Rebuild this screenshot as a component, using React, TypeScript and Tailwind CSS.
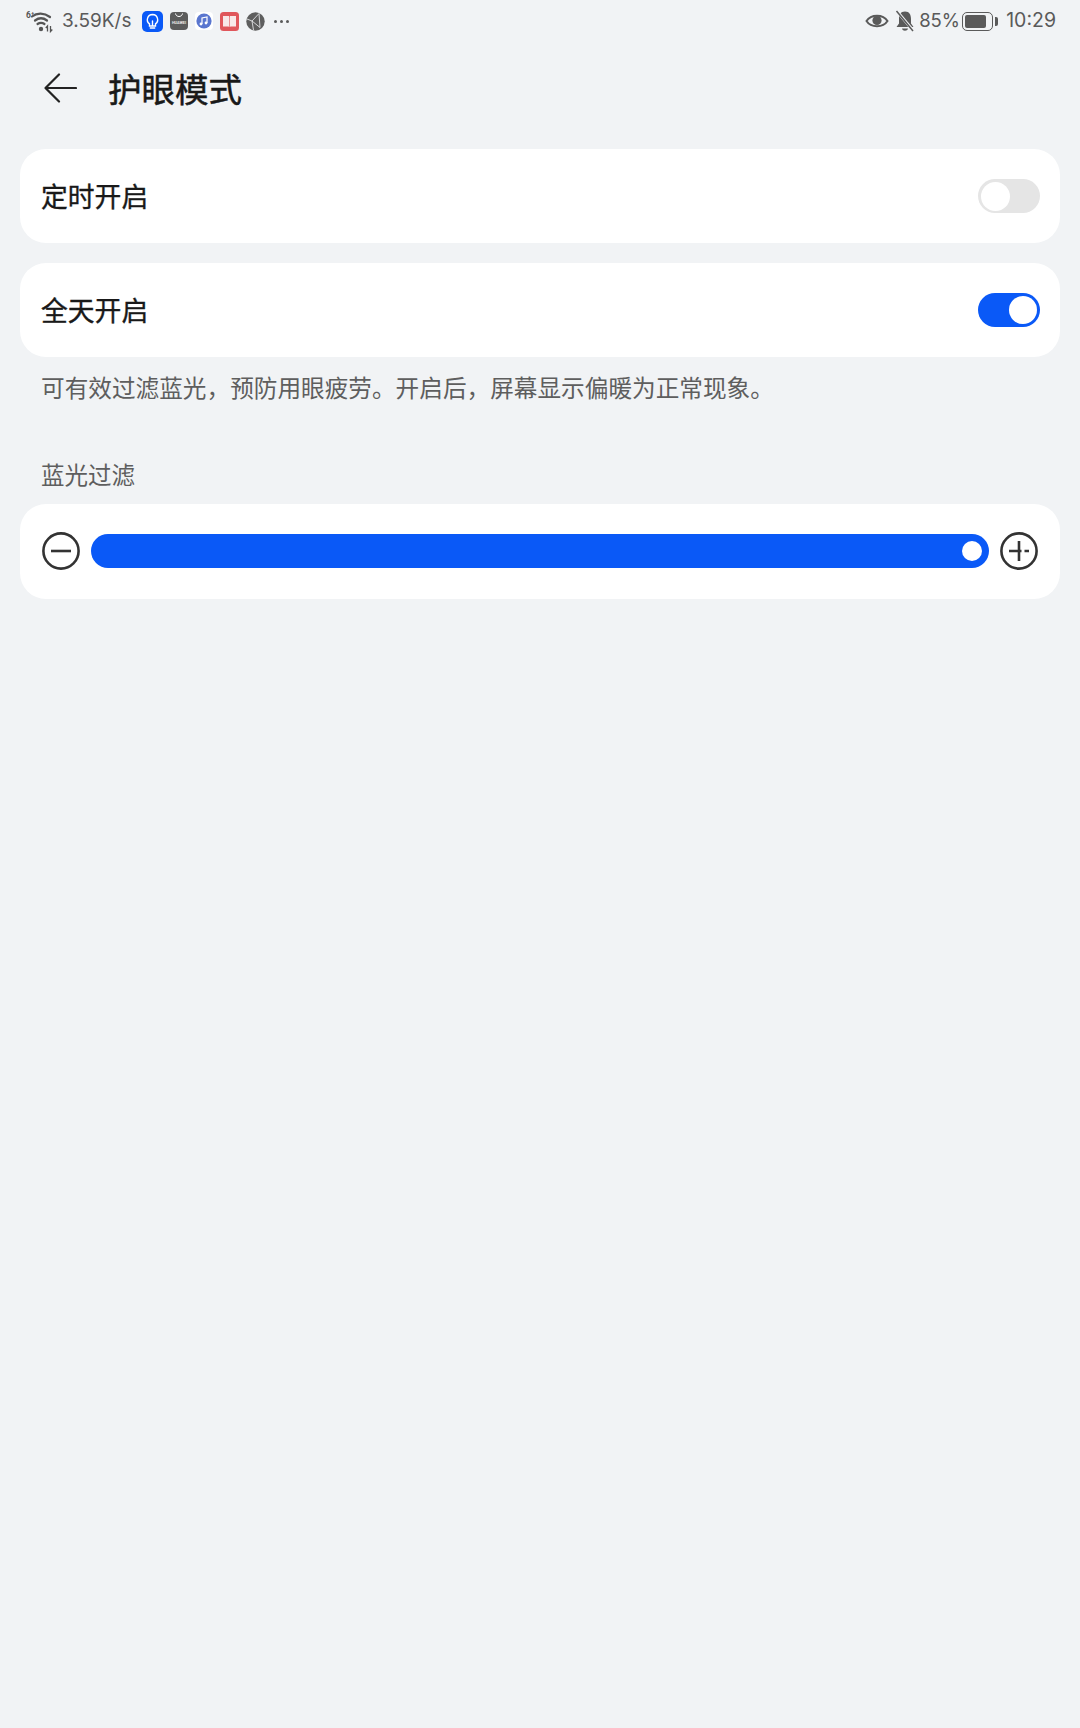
const cjk = "font-['Noto_Sans_CJK_SC','Noto_Sans',sans-serif]";

function Wifi() {
  return (
    <svg width="30" height="24" viewBox="0 0 30 24" className="shrink-0">
      <text x="1" y="9" fontSize="8.5" fontWeight="700" fill="#555" fontFamily="Roboto, sans-serif">6⁺</text>
      <g fill="none" stroke="#555" strokeWidth="2.2" strokeLinecap="round">
        <path d="M7 7.5 C12 3.5 19 3.5 25 8" />
        <path d="M10 11.5 C14 8.5 18 8.5 22 11.5" />
        <path d="M12.5 15 C15 13.3 17 13.3 19.5 15" />
      </g>
      <circle cx="16" cy="20" r="2.2" fill="#555" />
      <path d="M22.5 22.5 V17 L20.8 19 M25.5 17 V22.5 L27.3 20.5" fill="none" stroke="#555" strokeWidth="1.3" />
    </svg>
  );
}

function Tips() {
  return (
    <svg width="21" height="21" viewBox="0 0 21 21" className="shrink-0">
      <rect width="21" height="21" rx="5" fill="#0a59f7" />
      <path d="M10.5 3.5 a5.2 5.2 0 0 1 3 9.4 V15 H7.5 V12.9 a5.2 5.2 0 0 1 3-9.4 Z M8.3 17 H12.7 M10.5 15 V10" fill="none" stroke="#fff" strokeWidth="1.4" strokeLinecap="round" />
    </svg>
  );
}

function Store() {
  return (
    <svg width="18" height="18" viewBox="0 0 18 18" className="shrink-0">
      <rect width="18" height="18" rx="4" fill="#5c5c5c" />
      <path d="M5.5 1.5 C6 5.5 12 5.5 12.5 1.5" fill="none" stroke="#fff" strokeWidth="1" />
      <text x="9" y="11.5" textAnchor="middle" fontSize="3.8" fontWeight="700" fill="#e8e8e8" fontFamily="Roboto, sans-serif">HUAWEI</text>
    </svg>
  );
}

function Music() {
  return (
    <svg width="18" height="18" viewBox="0 0 18 18" className="shrink-0">
      <rect width="18" height="18" rx="4" fill="#fff" />
      <circle cx="9" cy="9" r="7.6" fill="#5a76cf" />
      <path d="M7 12 V6 L12 5 V11" fill="none" stroke="#fff" strokeWidth="1.2" />
      <circle cx="6" cy="12" r="1.4" fill="#fff" />
      <circle cx="11" cy="11" r="1.4" fill="#fff" />
    </svg>
  );
}

function Book() {
  return (
    <svg width="19" height="19" viewBox="0 0 19 19" className="shrink-0">
      <rect width="19" height="19" rx="3.5" fill="#e0565b" />
      <path d="M3 4 H8.6 C9 4 9.2 4.6 9.2 5 V15 L8.4 14.5 H3 Z M16 4 H10.4 C10 4 9.8 4.6 9.8 5 V15 L10.6 14.5 H16 Z" fill="#f8e8e8" />
    </svg>
  );
}

function Globe() {
  return (
    <svg width="19" height="19" viewBox="0 0 19 19" className="shrink-0">
      <circle cx="9.5" cy="9.5" r="9.2" fill="#5e5e5e" />
      <path d="M13 1.5 L6 9 L14 15.5 M6 9 L1 7 M6 9 L7.5 18 M13 1.5 L14 15.5" fill="none" stroke="#f1f3f5" strokeWidth="0.8" />
    </svg>
  );
}

function StatusBar() {
  return (
    <div className="flex h-[40px] items-center justify-between pl-[25px] pr-[24px] pt-[2px] text-[19.5px] text-[#5a5a5a] font-['Inter','Roboto',sans-serif]">
      <div className="flex items-center">
        <Wifi />
        <span className="ml-[7px] w-[80px] whitespace-nowrap text-[19px]">3.59K/s</span>
        <div className="flex items-center gap-[7px]">
          <Tips />
          <Store />
          <Music />
          <Book />
          <Globe />
        </div>
        <div className="ml-[9px] flex items-center gap-[3px]">
          <span className="h-[3px] w-[3px] rounded-full bg-[#5a5a5a]" />
          <span className="h-[3px] w-[3px] rounded-full bg-[#5a5a5a]" />
          <span className="h-[3px] w-[3px] rounded-full bg-[#5a5a5a]" />
        </div>
      </div>
      <div className="flex items-center">
        <svg width="24" height="18" viewBox="0 0 24 18" className="shrink-0">
          <path d="M1.5 9 C6 2 18 2 22.5 9 C18 16 6 16 1.5 9 Z" fill="none" stroke="#5a5a5a" strokeWidth="2" />
          <circle cx="12" cy="8.5" r="4.6" fill="#5a5a5a" />
        </svg>
        <svg width="20" height="22" viewBox="0 0 20 22" className="ml-[6px] shrink-0">
          <path d="M10 1.5 C5.5 1.5 4 5 4 9 V13.5 L1.5 17 H18.5 L16 13.5 V9 C16 5 14.5 1.5 10 1.5 Z M7 18.5 H13 C12.5 21.5 7.5 21.5 7 18.5 Z" fill="#5a5a5a" />
          <path d="M1.5 0.5 L18.5 21" stroke="#f1f3f5" strokeWidth="2.8" />
          <path d="M1.5 1 L18 21" stroke="#5a5a5a" strokeWidth="1.5" />
        </svg>
        <span className="ml-[4px] w-[39px] whitespace-nowrap text-[18.5px]">85%</span>
        <div className="ml-[4px] flex items-center">
          <div className="flex h-[19px] w-[31px] rounded-[5px] border-[1.5px] border-[#5a5a5a] p-[2px]">
            <div className="h-full w-[85%] rounded-[2px] bg-[#5a5a5a]" />
          </div>
          <div className="ml-[2px] h-[9px] w-[3px] rounded-r-[2px] bg-[#5a5a5a]" />
        </div>
        <span className="ml-[8px] whitespace-nowrap">10:29</span>
      </div>
    </div>
  );
}

function Toggle({ on }: { on: boolean }) {
  return on ? (
    <div className="flex h-[34px] w-[62px] items-center justify-end rounded-full bg-[#0a59f7] pr-[3px]">
      <div className="h-[28px] w-[28px] rounded-full bg-white" />
    </div>
  ) : (
    <div className="flex h-[34px] w-[62px] items-center rounded-full bg-[#e5e5e5] pl-[3px]">
      <div className="h-[29px] w-[29px] rounded-full bg-white" />
    </div>
  );
}

function Row({ label, on }: { label: string; on: boolean }) {
  return (
    <div className="flex h-[94px] items-center justify-between rounded-[26px] bg-white pl-[21px] pr-[20px]">
      <span className="text-[26.8px] font-normal text-[#191919] [-webkit-text-stroke:0.35px_#191919]">{label}</span>
      <Toggle on={on} />
    </div>
  );
}

export default function App() {
  return (
    <div className={`flex min-h-[1728px] flex-col bg-[#f1f3f5] ${cjk}`}>
      <StatusBar />
      <div className="mt-[14px] flex h-[68px] items-center pl-[44px]">
        <svg width="33" height="30" viewBox="0 0 33 30" className="shrink-0">
          <path d="M1.5 15 H32 M15 1.5 L1.5 15 L15 28.5" fill="none" stroke="#222" strokeWidth="2.2" strokeLinecap="round" strokeLinejoin="round" />
        </svg>
        <span className="ml-[31px] text-[33.5px] font-normal text-[#191919] [-webkit-text-stroke:0.5px_#191919]">护眼模式</span>
      </div>
      <div className="mt-[27px] flex flex-col px-[20px]">
        <Row label="定时开启" on={false} />
        <div className="mt-[20px]">
          <Row label="全天开启" on />
        </div>
        <p className="mt-[14px] pl-[21px] text-[23.65px] leading-[32px] text-[#5e5e5e]">
          可有效过滤蓝光，预防用眼疲劳。开启后，屏幕显示偏暖为正常现象。
        </p>
        <p className="mt-[55px] pl-[21px] text-[23.5px] leading-[32px] text-[#5e5e5e]">蓝光过滤</p>
        <div className="mt-[14px] flex h-[95px] items-center rounded-[26px] bg-white pb-[1px] pl-[22px] pr-[22px]">
          <svg width="38" height="38" viewBox="0 0 38 38" className="shrink-0">
            <circle cx="19" cy="19" r="17.6" fill="none" stroke="#333" strokeWidth="2.6" />
            <path d="M9 19 H29" stroke="#333" strokeWidth="2.6" />
          </svg>
          <div className="ml-[11px] flex h-[34px] flex-1 items-center justify-end rounded-full bg-[#0a59f7] pr-[7px]">
            <div className="h-[20px] w-[20px] rounded-full bg-white" />
          </div>
          <svg width="38" height="38" viewBox="0 0 38 38" className="ml-[11px] shrink-0">
            <circle cx="19" cy="19" r="17.6" fill="none" stroke="#333" strokeWidth="2.6" />
            <path d="M9 19 H21.5 M24.5 19 H29 M19 9 V29" stroke="#333" strokeWidth="2.6" />
          </svg>
        </div>
      </div>
    </div>
  );
}
